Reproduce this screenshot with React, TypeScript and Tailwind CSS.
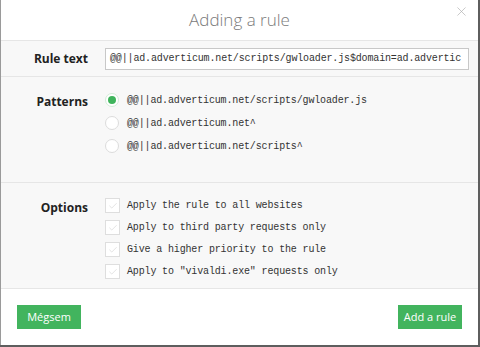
import { X, Check } from "lucide-react";

const patterns = [
  "@@||ad.adverticum.net/scripts/gwloader.js",
  "@@||ad.adverticum.net^",
  "@@||ad.adverticum.net/scripts^",
];

const options = [
  "Apply the rule to all websites",
  "Apply to third party requests only",
  "Give a higher priority to the rule",
  'Apply to "vivaldi.exe" requests only',
];

const mono = "font-['Liberation_Mono',monospace] text-[10px] tracking-[-0.15px] text-[#333]";

export default function App() {
  return (
    <div className="h-[347px] w-[480px] bg-[#5e5e5e] font-['Open_Sans',sans-serif]">
      <div className="flex h-[345px] w-[478px] flex-col border-l border-[#9a9a9a] bg-white">
        {/* header */}
        <div className="relative flex h-[41px] items-center justify-center border-b border-[#e6e6e6]">
          <h1 className="text-[17px] font-light text-[#7a7a7a]">Adding a rule</h1>
          <button className="absolute right-[9px] top-[4px] text-[#b0b0b0]">
            <X size={15} strokeWidth={1.1} />
          </button>
        </div>

        {/* rule text */}
        <div className="flex h-[36px] items-center border-b border-[#e6e6e6] bg-[#f8f8f8]">
          <div className="w-[87px] text-right text-[12px] font-bold text-[#222]">Rule text</div>
          <div className="ml-[17px] flex h-[22px] w-[364px] items-center overflow-hidden whitespace-nowrap border border-[#c8c8c8] bg-white pl-[4px]">
            <span className={mono}>@@||ad.adverticum.net/scripts/gwloader.js$domain=ad.advertic</span>
          </div>
        </div>

        {/* patterns */}
        <div className="flex h-[106px] border-b border-[#e6e6e6] bg-[#f8f8f8] pt-[16px]">
          <div className="w-[87px] text-right text-[12px] font-bold text-[#222]">Patterns</div>
          <div className="ml-[17px] flex flex-col gap-[9px]">
            {patterns.map((p, i) => (
              <div key={p} className="flex h-[14px] items-center">
                <span
                  className={
                    i === 0
                      ? "flex h-[14px] w-[14px] items-center justify-center rounded-full border border-[#d4ecd9] bg-white"
                      : "h-[14px] w-[14px] rounded-full border border-[#dcdcdc] bg-white"
                  }
                >
                  {i === 0 && <span className="h-[8px] w-[8px] rounded-full bg-[#3fb45c]" />}
                </span>
                <span className={`ml-[8px] ${mono}`}>{p}</span>
              </div>
            ))}
          </div>
        </div>

        {/* options */}
        <div className="flex h-[106px] border-b border-[#e6e6e6] bg-[#f8f8f8] pt-[15px]">
          <div className="w-[87px] pt-[1px] text-right text-[12px] font-bold text-[#222]">Options</div>
          <div className="ml-[17px] flex flex-col gap-[7px]">
            {options.map((o) => (
              <div key={o} className="flex h-[15px] items-center">
                <span className="flex h-[15px] w-[15px] items-center justify-center border border-[#dedede] bg-white text-[#d2d2d2]">
                  <Check size={10} strokeWidth={1.5} />
                </span>
                <span className={`ml-[7px] ${mono}`}>{o}</span>
              </div>
            ))}
          </div>
        </div>

        {/* footer */}
        <div className="flex flex-1 items-start justify-between px-[16px] pt-[16px]">
          <button className="h-[24px] w-[64px] bg-[#42b45e] text-[11px] text-white">Mégsem</button>
          <button className="h-[24px] w-[64px] bg-[#42b45e] text-[11px] text-white">Add a rule</button>
        </div>
      </div>
    </div>
  );
}
